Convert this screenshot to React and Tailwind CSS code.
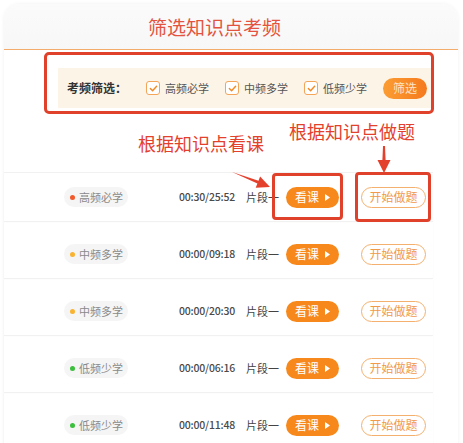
import React from "react";

const rows = [
  { level: "高频必学", dot: "bg-[#f25a2c]", time: "00:30/25:52" },
  { level: "中频多学", dot: "bg-[#f8b332]", time: "00:00/09:18" },
  { level: "中频多学", dot: "bg-[#f8b332]", time: "00:00/20:30" },
  { level: "低频少学", dot: "bg-[#3cbf3c]", time: "00:00/06:16" },
  { level: "低频少学", dot: "bg-[#3cbf3c]", time: "00:00/11:48" },
];

const filters = ["高频必学", "中频多学", "低频少学"];

function CheckBox() {
  return (
    <span className="flex h-[14px] w-[14px] shrink-0 items-center justify-center rounded-[3px] border border-[#f3a55a] bg-white">
      <svg width="9" height="9" viewBox="0 0 10 10">
        <polyline points="1.5,5 4,7.5 8.5,2.5" fill="none" stroke="#f28a25" strokeWidth="1.6" strokeLinecap="round" strokeLinejoin="round" />
      </svg>
    </span>
  );
}

function Row({ row, first }) {
  return (
    <div
      className={
        "flex w-[429px] items-center whitespace-nowrap border-t border-[#f1f1f1] pl-[60px] shadow-[0_1px_2px_rgba(0,0,0,0.03)] " +
        (first ? "h-[49px]" : "h-[57px] pt-[8px]")
      }
    >
      <div className="flex h-[20px] w-[64px] shrink-0 items-center gap-[4px] rounded-full bg-[#f5f5f5] pl-[6px]">
        <span className={"h-[5px] w-[5px] rounded-full " + row.dot}></span>
        <span className="text-[11px] leading-none text-[#8a8a8a]">{row.level}</span>
      </div>
      <div className="ml-[51px] w-[67px] shrink-0 text-[10.5px] font-medium leading-none tracking-[-0.2px] text-[#4a4a4a]">
        {row.time}
      </div>
      <div className="w-[40px] shrink-0 text-[11px] leading-none text-[#444]">片段一</div>
      <button className="flex h-[21px] w-[53px] shrink-0 items-center justify-center gap-[6px] rounded-full bg-[#f7891c] text-[12px] leading-none text-white">
        看课
        <svg width="5" height="7" viewBox="0 0 5 7">
          <polygon points="0,0 5,3.5 0,7" fill="#fff" />
        </svg>
      </button>
      <button className="ml-[22px] flex h-[21px] w-[65px] shrink-0 items-center justify-center rounded-full border border-[#f4b06e] text-[12px] leading-none text-[#f19a4c]">
        开始做题
      </button>
    </div>
  );
}

export default function App() {
  return (
    <div
      className="relative h-[443px] w-[463px] overflow-hidden bg-white p-[4px]"
      style={{ fontFamily: '"Noto Sans CJK SC", "Liberation Sans", sans-serif' }}
    >
      <div className="h-[460px] w-[454px] rounded-[16px] bg-white shadow-[0_0_4px_rgba(0,0,0,0.06)]">
        {/* Header */}
        <div className="flex h-[46px] items-center rounded-t-[16px] border-b border-[#f3ac6c] bg-gradient-to-b from-[#fbfbfb] to-[#f7f7f7] pl-[144px]">
          <span className="text-[19px] leading-none text-[#e3533f]">筛选知识点考频</span>
        </div>

        {/* Filter box */}
        <div className="ml-[40px] mt-[2px] h-[62px] w-[390px] overflow-hidden rounded-[5px] border-[3px] border-[#e0412b] pl-[11px] pt-[13px]">
          <div className="flex h-[40px] items-center whitespace-nowrap bg-[#fdf4e8] pl-[9px]">
            <span className="shrink-0 text-[12px] font-bold leading-none text-[#333]">考频筛选：</span>
            <div className="ml-[19px] flex shrink-0 items-center">
              {filters.map((f) => (
                <div key={f} className="mr-[16px] flex items-center gap-[5px]">
                  <CheckBox />
                  <span className="text-[11px] leading-none text-[#555]">{f}</span>
                </div>
              ))}
            </div>
            <button className="flex h-[21px] w-[44px] shrink-0 items-center justify-center rounded-full bg-gradient-to-r from-[#fb9d33] to-[#f5791d] text-[12px] leading-none text-[#fde4c8]">
              筛选
            </button>
          </div>
        </div>

        {/* Annotations */}
        <div className="flex h-[58px] items-start whitespace-nowrap pl-[134px]">
          <span className="mt-[20px] text-[18px] leading-none text-[#e4412d]">根据知识点看课</span>
          <span className="ml-[25px] mt-[8px] text-[18px] leading-none text-[#e4412d]">根据知识点做题</span>
        </div>

        {/* Rows */}
        <div className="flex flex-col">
          {rows.map((r, i) => (
            <Row key={i} row={r} first={i === 0} />
          ))}
        </div>
      </div>

      {/* Annotation overlays */}
      <div className="absolute left-[272px] top-[173px] h-[47px] w-[71px] rounded-[4px] border-[3px] border-[#e0412b]"></div>
      <div className="absolute left-[355px] top-[172px] h-[50px] w-[76px] rounded-[4px] border-[3px] border-[#e0412b]"></div>
      <svg className="pointer-events-none absolute left-0 top-0" width="463" height="443" viewBox="0 0 463 443">
        <polygon points="232,172 257.4,183.6 255.7,187.8 270,187 260.1,176.6 258.5,180.8" fill="#e4412d" />
        <polygon points="383,146 385,146 385.6,160 390.5,160 384,173 377.5,160 382.4,160" fill="#e4412d" />
      </svg>
    </div>
  );
}
